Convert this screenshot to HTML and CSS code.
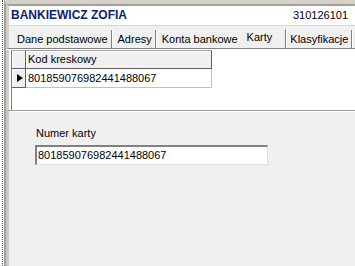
FILE: index.html
```html
<!DOCTYPE html>
<html>
<head>
<meta charset="utf-8">
<link rel="stylesheet" href="styles.css">
</head>
<body>
<div class="shell">
  <div class="dots"><div class="dotline"></div></div>
  <div class="frame">
    <div class="header">
      <span class="name">BANKIEWICZ ZOFIA</span>
      <span class="code">310126101</span>
    </div>
    <div class="tabs">
      <div class="tab t1">Dane podstawowe</div>
      <div class="tab t2">Adresy</div>
      <div class="tab t3">Konta bankowe</div>
      <div class="tab active">Karty</div>
      <div class="tab t5">Klasyfikacje</div>
    </div>
    <div class="grid-area">
      <div class="grid">
        <div class="cell fixed corner"></div>
        <div class="cell fixed head">Kod kreskowy</div>
        <div class="cell fixed ind"><span class="arrow"></span></div>
        <div class="cell data">801859076982441488067</div>
      </div>
    </div>
    <div class="form">
      <div class="label">Numer karty</div>
      <div class="input">801859076982441488067</div>
    </div>
  </div>
</div>
</body>
</html>
```

FILE: styles.css
```css
html, body {
  margin: 0;
  padding: 0;
  background: #ffffff;
  font-family: "Liberation Sans", Arial, sans-serif;
  font-size: 11px;
  color: #000;
  overflow: hidden;
}
.shell {
  display: flex;
  width: 355px;
  height: 266px;
}
.dots {
  width: 4px;
  flex: none;
}
.dotline {
  margin-left: 2px;
  height: 100%;
  border-left: 1px dotted #555;
}
.frame {
  flex: 1;
  display: flex;
  flex-direction: column;
  border-left: 2px solid #a0a0a0;
  border-top: 4px solid #d4d0c8;
}
.header {
  display: flex;
  align-items: baseline;
  justify-content: space-between;
  height: 19px;
  line-height: 19px;
  padding: 0 7px 0 2px;
  background: #fff;
  border-left: 3px solid #d4d0c8;
  border-top: 2px solid #a0a0a0;
}
.name {
  font-weight: bold;
  font-size: 12px;
  color: #0a246a;
}
.code {
  font-size: 11px;
}
.tabs {
  display: flex;
  align-items: flex-end;
  height: 22px;
  padding-left: 2px;
  background: #f0f0f0;
  border-left: 3px solid #d4d0c8;
  border-top: 1px solid #d8d8d8;
  border-bottom: 1px solid #808080;
  box-shadow: 0 1px 0 #ffffff;
}
.tab {
  height: 18px;
  line-height: 18px;
  padding: 0 3px 0 6px;
  border-right: 1px solid #808080;
  box-shadow: 1px 0 0 #ffffff;
  white-space: nowrap;
}
.t3 {
  border-right-color: transparent;
  box-shadow: none;
}
.active {
  padding: 0 13px 1px 5px;
  line-height: 17px;
}
.t5 {
  padding-left: 4px;
}
.grid-area {
  height: 60px;
  margin-top: 1px;
  background: #fff;
  border-left: 3px solid #d4d0c8;
  padding-left: 2px;
}
.grid {
  display: grid;
  grid-template-columns: 14px 186px;
  grid-template-rows: 18px 19px;
  height: 100%;
  align-content: start;
  width: 200px;
  border-left: 1px solid #808080;
  border-top: 1px solid #a0a0a0;
}
.cell {
  box-sizing: border-box;
  white-space: nowrap;
}
.fixed {
  background: #f0f0f0;
  border-right: 1px solid #606060;
  border-bottom: 1px solid #606060;
  box-shadow: inset 1px 1px 0 #ffffff;
}
.head {
  padding-left: 2px;
  line-height: 17px;
}
.ind {
  display: flex;
  align-items: center;
  justify-content: center;
  padding-left: 2px;
}
.arrow {
  width: 0;
  height: 0;
  border-top: 4.5px solid transparent;
  border-bottom: 4.5px solid transparent;
  border-left: 6px solid #000;
}
.data {
  padding-left: 2px;
  line-height: 18px;
  border-right: 1px solid #c0c0c0;
  border-bottom: 1px solid #c0c0c0;
}
.form {
  flex: 1;
  background: #f0f0f0;
  border-left: 3px solid #c8c8c8;
  border-top: 1px solid #a0a0a0;
  box-shadow: inset 0 1px 0 #ffffff;
  padding: 16px 0 0 26px;
}
.label {
  padding-left: 1px;
  line-height: 13px;
}
.input {
  margin-top: 5px;
  width: 233px;
  height: 20px;
  box-sizing: border-box;
  background: #fff;
  border-top: 2px solid #808080;
  border-left: 2px solid #808080;
  border-right: 1px solid #e0e0e0;
  border-bottom: 1px solid #e0e0e0;
  padding-left: 1px;
  line-height: 17px;
}
```
